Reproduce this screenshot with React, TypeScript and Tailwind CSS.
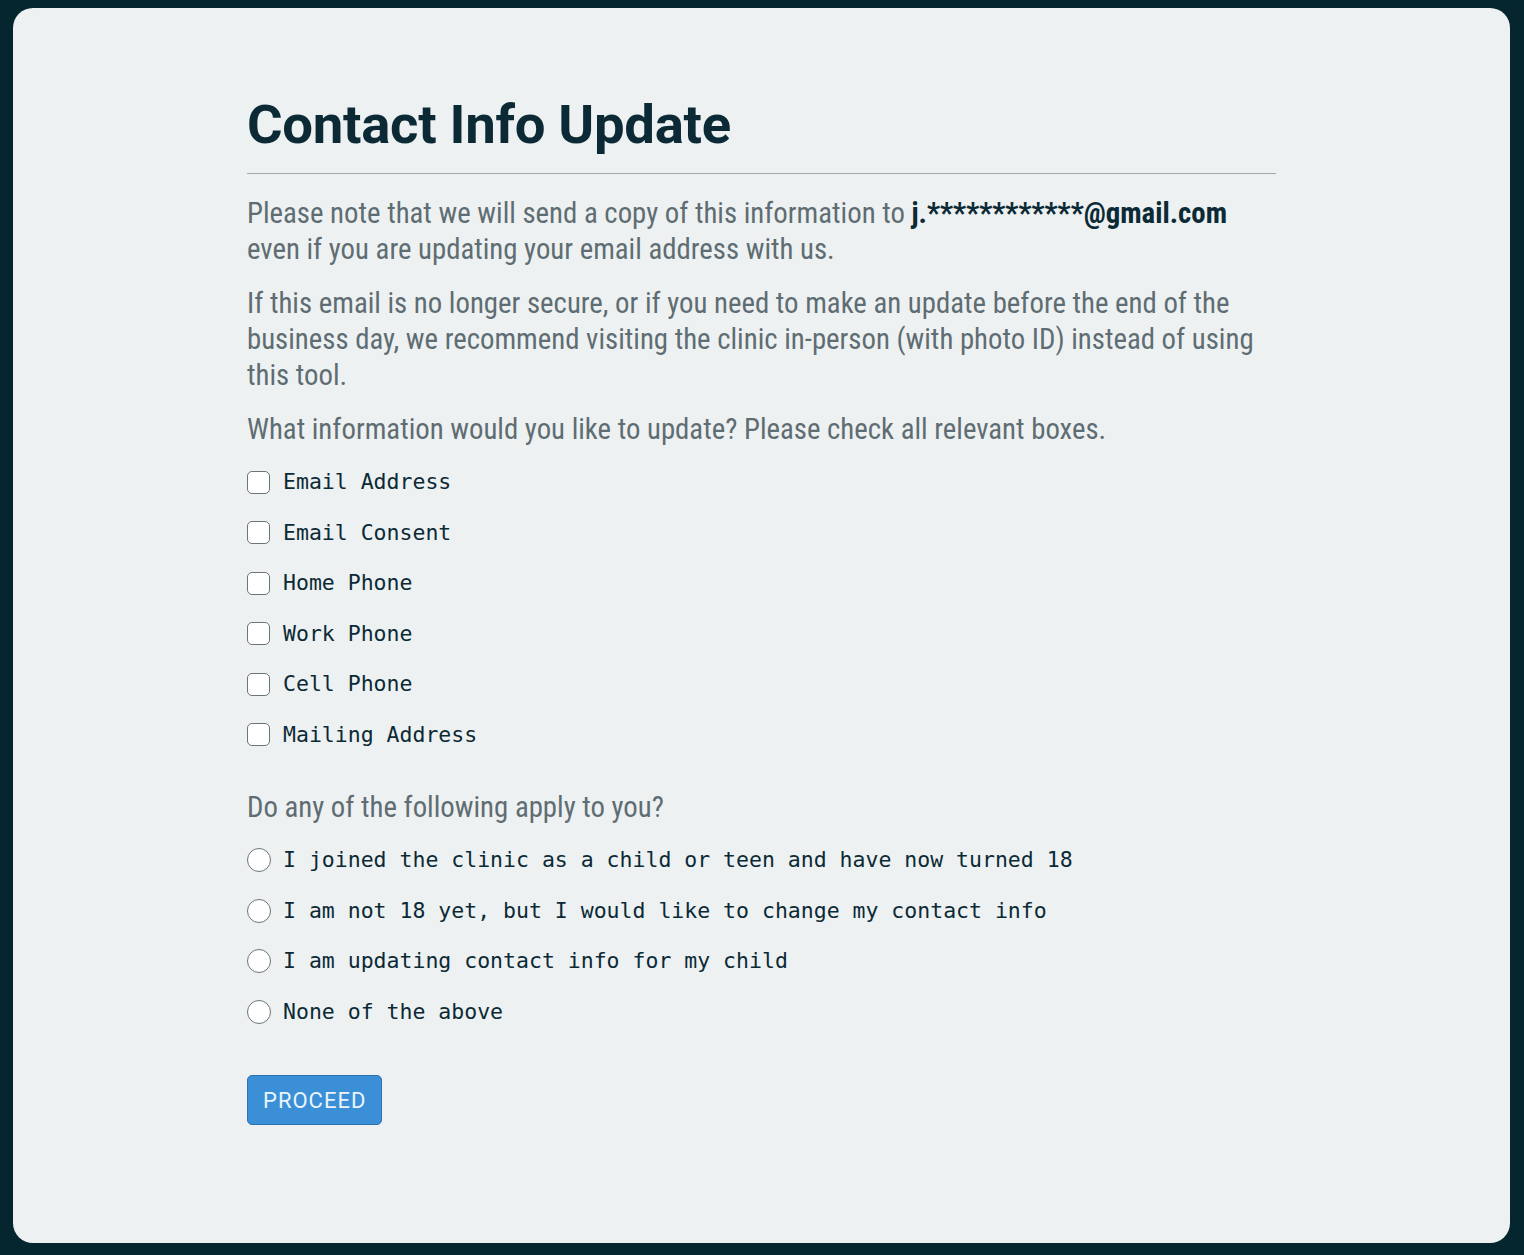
import { useState } from 'react'

const updateOptions = [
  'Email Address',
  'Email Consent',
  'Home Phone',
  'Work Phone',
  'Cell Phone',
  'Mailing Address',
]

const situationOptions = [
  'I joined the clinic as a child or teen and have now turned 18',
  'I am not 18 yet, but I would like to change my contact info',
  'I am updating contact info for my child',
  'None of the above',
]

export default function App() {
  const [checked, setChecked] = useState<string[]>([])
  const [situation, setSituation] = useState<string | null>(null)

  const toggle = (label: string) =>
    setChecked((prev) => (prev.includes(label) ? prev.filter((l) => l !== label) : [...prev, label]))

  return (
    <div className="h-[1255px] bg-[#06262f] pt-2 pl-[13px] pr-[14px] pb-3 flex flex-col font-['Roboto',sans-serif]">
      <div className="flex-1 bg-[#eef1f1] rounded-[20px]">
        <div className="max-w-[1029px] mx-auto pt-[81px]">
          <h1 className="text-[54.5px] leading-[70px] font-bold text-[#0b2a36] tracking-[-0.3px]">Contact Info Update</h1>
          <hr className="mt-[14px] border-0 border-t border-[#a3a8aa]" />

          <div className="mt-[21px] text-[28.8px] leading-[36px] text-[#5e6d73] font-stretch-condensed space-y-[18px]">
            <p>
              Please note that we will send a copy of this information to{' '}
              <span className="font-bold text-[#0b2a36]">j.************@gmail.com</span> even if you are updating your
              email address with us.
            </p>
            <p>
              If this email is no longer secure, or if you need to make an update before the end of the business day, we
              recommend visiting the clinic in-person (with photo ID) instead of using this tool.
            </p>
            <p>What information would you like to update? Please check all relevant boxes.</p>
          </div>

          <div className="mt-[10px] flex flex-col">
            {updateOptions.map((label) => (
              <label key={label} className="flex items-center h-[50.5px] cursor-pointer">
                <input
                  type="checkbox"
                  checked={checked.includes(label)}
                  onChange={() => toggle(label)}
                  className="appearance-none w-[23px] h-[23px] bg-white border-[1.5px] border-[#6b7478] rounded-[5px] checked:bg-[#3a8fd6]"
                />
                <span className="ml-[13px] font-['DejaVu_Sans_Mono',monospace] text-[21.5px] text-[#0b2a36]">{label}</span>
              </label>
            ))}
          </div>

          <p className="mt-[29px] text-[28.8px] leading-[36px] text-[#5e6d73] font-stretch-condensed">
            Do any of the following apply to you?
          </p>

          <div className="mt-[10px] flex flex-col">
            {situationOptions.map((label) => (
              <label key={label} className="flex items-center h-[50.5px] cursor-pointer">
                <input
                  type="radio"
                  name="situation"
                  checked={situation === label}
                  onChange={() => setSituation(label)}
                  className="appearance-none w-[24px] h-[24px] bg-white border-[1.5px] border-[#6b7478] rounded-full checked:border-[7px] checked:border-[#3a8fd6]"
                />
                <span className="ml-[12px] font-['DejaVu_Sans_Mono',monospace] text-[21.5px] text-[#0b2a36]">{label}</span>
              </label>
            ))}
          </div>

          <button className="mt-[38px] h-[50px] px-[15px] bg-[#3a8fd6] border border-[#2c73b0] rounded-[5px] text-[22px] tracking-[1px] text-[#eaf4fb]">
            PROCEED
          </button>
        </div>
      </div>
    </div>
  )
}
